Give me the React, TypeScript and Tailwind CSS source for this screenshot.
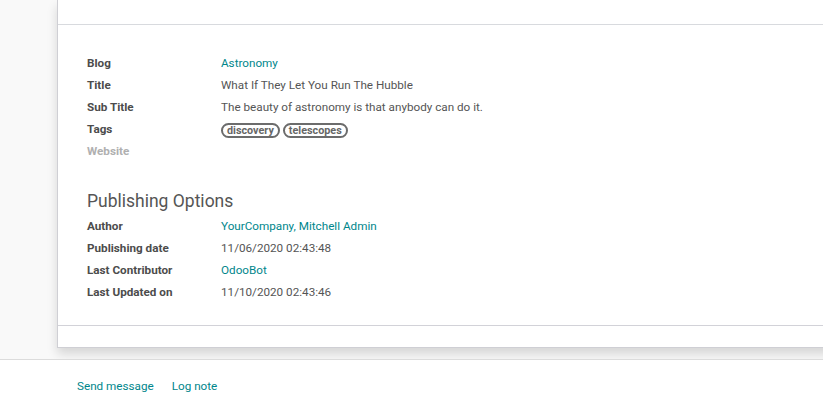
const Row = ({ label, children, muted }: { label: string; children?: React.ReactNode; muted?: boolean }) => (
  <div className="flex h-[22px] items-center">
    <div className={`w-[134px] shrink-0 font-bold ${muted ? 'text-[#b0b0b0]' : 'text-[#4c4c4c]'}`}>{label}</div>
    <div className="flex items-center gap-[3px] text-[#555]">{children}</div>
  </div>
)

const Link = ({ children }: { children: React.ReactNode }) => (
  <a className="text-[#00868b] cursor-pointer">{children}</a>
)

const Tag = ({ name }: { name: string }) => (
  <span className="h-[15px] rounded-full border-2 border-[#6c6c6c] px-[4px] text-[10.8px] font-bold leading-[11px] text-[#666] flex items-center">
    {name}
  </span>
)

export default function App() {
  return (
    <div className="w-[823px] h-[397px] overflow-hidden bg-white text-[11.7px] font-['Roboto',sans-serif]">
      <div className="h-[360px] bg-[#f9f9f9] border-b border-[#dcdcdc] pl-[57px] overflow-hidden">
        <div className="w-[900px] h-[348px] bg-white border-l border-b border-[#cfcfd4] shadow-[0_6px_10px_rgba(0,0,0,0.14)] flex flex-col">
          <div className="h-[25px] border-b border-[#d8dade] shrink-0" />
          <div className="pl-[29px] pt-[28px] flex-1">
            <Row label="Blog"><Link>Astronomy</Link></Row>
            <Row label="Title">What If They Let You Run The Hubble</Row>
            <Row label="Sub Title">The beauty of astronomy is that anybody can do it.</Row>
            <Row label="Tags">
              <Tag name="discovery" />
              <Tag name="telescopes" />
            </Row>
            <Row label="Website" muted />
            <h2 className="mt-[26px] mb-[3px] h-[24px] flex items-center text-[17.5px] text-[#555]">Publishing Options</h2>
            <Row label="Author"><Link>YourCompany, Mitchell Admin</Link></Row>
            <Row label="Publishing date">11/06/2020 02:43:48</Row>
            <Row label="Last Contributor"><Link>OdooBot</Link></Row>
            <Row label="Last Updated on">11/10/2020 02:43:46</Row>
          </div>
          <div className="h-[22px] border-t border-[#d2d2d8] shrink-0" />
        </div>
      </div>
      <div className="flex items-center gap-[18px] pl-[77px] pt-[17px] text-[11.7px] text-[#00868b]">
        <button className="leading-[18px]">Send message</button>
        <button className="leading-[18px]">Log note</button>
      </div>
    </div>
  )
}
